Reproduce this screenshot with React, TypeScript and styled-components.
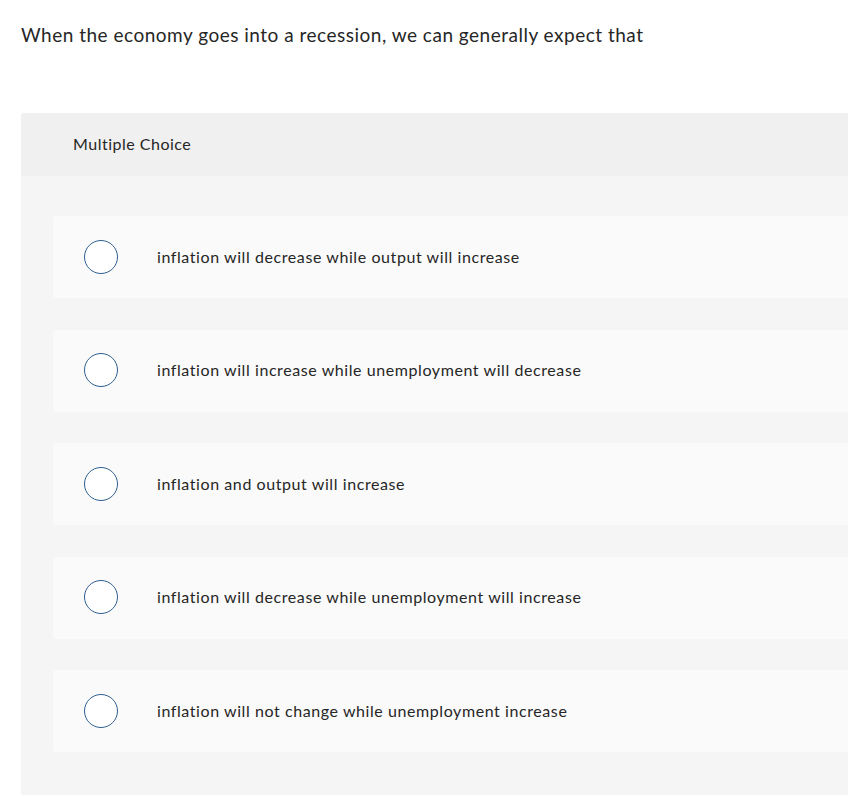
import styled, { createGlobalStyle } from "styled-components";

const GlobalStyle = createGlobalStyle`
  html, body {
    margin: 0;
    padding: 0;
    background: #ffffff;
    overflow: hidden;
  }
  body {
    font-family: "Lato", "Liberation Sans", sans-serif;
    color: #1f1f1f;
  }
`;

const Page = styled.div`
  padding: 22px 0 0 21px;
  width: 900px;
`;

const Question = styled.p`
  margin: 0;
  font-size: 19px;
  line-height: 26px;
  letter-spacing: 0.5px;
  color: #262626;
`;

const Card = styled.section`
  margin-top: 65px;
  background: #f5f5f5;
  border-radius: 3px 0 0 0;
`;

const CardHeader = styled.div`
  height: 63px;
  display: flex;
  align-items: center;
  padding: 0 0 2px 52px;
  box-sizing: border-box;
  background: #f0f0f0;
  font-size: 16px;
  letter-spacing: 0.5px;
  color: #262626;
  border-radius: 3px 0 0 0;
`;

const OptionList = styled.ul`
  list-style: none;
  margin: 0;
  padding: 40px 0 44px 32px;
  display: flex;
  flex-direction: column;
  gap: 31.5px;
`;

const Option = styled.li`
  height: 82px;
  display: flex;
  align-items: center;
  background: #fafafa;
  border-radius: 3px 0 0 3px;
  padding-left: 31px;
  padding-bottom: 2px;
  box-sizing: border-box;
`;

const Radio = styled.span`
  width: 32px;
  height: 32px;
  border-radius: 50%;
  border: 1.5px solid #2e5f8f;
  background: #ffffff;
  flex-shrink: 0;
  margin-top: 1px;
`;

const OptionLabel = styled.span`
  margin-left: 39px;
  font-size: 16px;
  letter-spacing: 0.58px;
  color: #262626;
`;

const options = [
  "inflation will decrease while output will increase",
  "inflation will increase while unemployment will decrease",
  "inflation and output will increase",
  "inflation will decrease while unemployment will increase",
  "inflation will not change while unemployment increase",
];

export default function App() {
  return (
    <>
      <GlobalStyle />
      <Page>
        <Question>
          When the economy goes into a recession, we can generally expect that
        </Question>
        <Card>
          <CardHeader>Multiple Choice</CardHeader>
          <OptionList>
            {options.map((o) => (
              <Option key={o}>
                <Radio />
                <OptionLabel>{o}</OptionLabel>
              </Option>
            ))}
          </OptionList>
        </Card>
      </Page>
    </>
  );
}
